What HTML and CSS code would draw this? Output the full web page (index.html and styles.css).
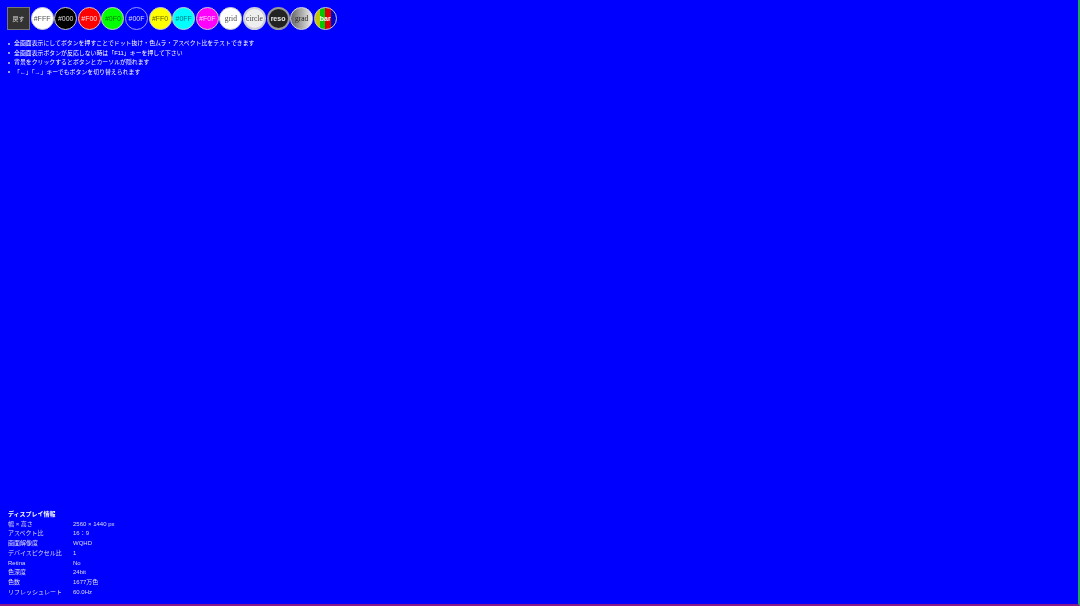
FILE: index.html
```html
<!DOCTYPE html>
<html lang="ja">
<head>
    <meta charset="UTF-8">
    <meta name="viewport" content="width=device-width, initial-scale=1.0">
    <title>ディスプレイチェック</title>
    <link rel="stylesheet" href="styles.css">
</head>
<body>
    <div class="screen">
        <div class="top-area">
            <div class="buttons">
                <button class="btn btn-back">戻す</button>
                <button class="btn btn-white">#FFF</button>
                <button class="btn btn-black">#000</button>
                <button class="btn btn-red">#F00</button>
                <button class="btn btn-green">#0F0</button>
                <button class="btn btn-blue">#00F</button>
                <button class="btn btn-yellow">#FF0</button>
                <button class="btn btn-cyan">#0FF</button>
                <button class="btn btn-magenta">#F0F</button>
                <button class="btn btn-grid">grid</button>
                <button class="btn btn-circle">circle</button>
                <button class="btn btn-reso">reso</button>
                <button class="btn btn-grad">grad</button>
                <button class="btn btn-bar">bar</button>
            </div>
            <ul class="notes">
                <li>全画面表示にしてボタンを押すことでドット抜け・色ムラ・アスペクト比をテストできます</li>
                <li>全画面表示ボタンが反応しない時は「F11」キーを押して下さい</li>
                <li>背景をクリックするとボタンとカーソルが隠れます</li>
                <li>「←」「→」キーでもボタンを切り替えられます</li>
            </ul>
        </div>
        <div class="info">
            <div class="info-title">ディスプレイ情報</div>
            <dl class="info-table">
                <dt>幅 × 高さ</dt><dd>2560 × 1440 px</dd>
                <dt>アスペクト比</dt><dd>16：9</dd>
                <dt>画面解像度</dt><dd>WQHD</dd>
                <dt>デバイスピクセル比</dt><dd>1</dd>
                <dt>Retina</dt><dd>No</dd>
                <dt>色深度</dt><dd>24bit</dd>
                <dt>色数</dt><dd>1677万色</dd>
                <dt>リフレッシュレート</dt><dd>60.0Hz</dd>
            </dl>
        </div>
    </div>
</body>
</html>
```

FILE: styles.css
```css
html, body {
    height: 100%;
}

body {
    margin: 0;
    background: #0000ff;
    color: #fff;
    font-family: "Liberation Sans", "Noto Sans CJK JP", sans-serif;
    font-size: 6px;
    overflow: hidden;
}

.screen {
    box-sizing: border-box;
    height: 100%;
    padding: 7px 0 6.5px 7px;
    display: flex;
    flex-direction: column;
    justify-content: space-between;
    border-right: 2px solid #1fa85a;
    border-bottom: 2px solid #8a1a8a;
}

/* the reference is a downscaled capture, so the content is slightly soft */
.top-area, .info {
    filter: blur(0.35px);
}

.buttons {
    display: flex;
    gap: 0.6px;
}

.btn {
    width: 23px;
    height: 23px;
    flex: none;
    margin: 0;
    padding: 0;
    border: 1px solid #ccc;
    border-radius: 50%;
    font-family: "Liberation Sans", "Noto Sans CJK JP", sans-serif;
    font-size: 7px;
    text-align: center;
}

.btn-back {
    border-radius: 0;
    border-color: #777;
    background: #333;
    color: #ddd;
    font-size: 6px;
}

.btn-white { background: #fff; color: #555; }
.btn-black { background: #000; color: #ddd; }
.btn-red { background: #f00; color: #fdd; }
.btn-green { background: #0f0; color: #070; }
.btn-blue { background: #00f; color: #ddf; border-color: #99f; }
.btn-yellow { background: #ff0; color: #660; }
.btn-cyan { background: #0ff; color: #077; }
.btn-magenta { background: #f0f; color: #fdf; }

.btn-grid { background: #fff; color: #444; font-family: "Liberation Serif", serif; font-size: 7.5px; }
.btn-circle { background: #eee; color: #444; font-family: "Liberation Serif", serif; font-size: 7.5px; border: 2px solid #ccd; }
.btn-reso { background: #222; color: #eee; font-weight: bold; border: 2px solid #999; }
.btn-grad { background: linear-gradient(90deg, #666, #eee); color: #222; font-family: "Liberation Serif", serif; font-size: 7.5px; border: 1px solid #ddd; }

.btn-bar {
    background: linear-gradient(90deg, #c4c400 0 25%, #00c800 25% 50%, #d00 50% 75%, #0000c8 75%);
    color: #fff;
    font-weight: bold;
}

.notes {
    margin: 9px 0 0;
    padding: 0 0 0 1px;
    list-style: none;
    line-height: 9.5px;
}

.notes li {
    display: flex;
    align-items: center;
    gap: 4px;
    font-size: 5.9px;
}

.notes li::before {
    content: "";
    flex: none;
    width: 2px;
    height: 2px;
    border-radius: 50%;
    background: #ccd;
}

.info-title {
    font-weight: bold;
    line-height: 9px;
    margin: 0 0 0.5px 1px;
}

.info-table {
    margin: 0 0 0 1px;
    display: grid;
    grid-template-columns: 65px 1fr;
    grid-auto-rows: 9.75px;
    line-height: 9.75px;
    color: #dde;
}

.info-table dd {
    margin: 0;
}
```
